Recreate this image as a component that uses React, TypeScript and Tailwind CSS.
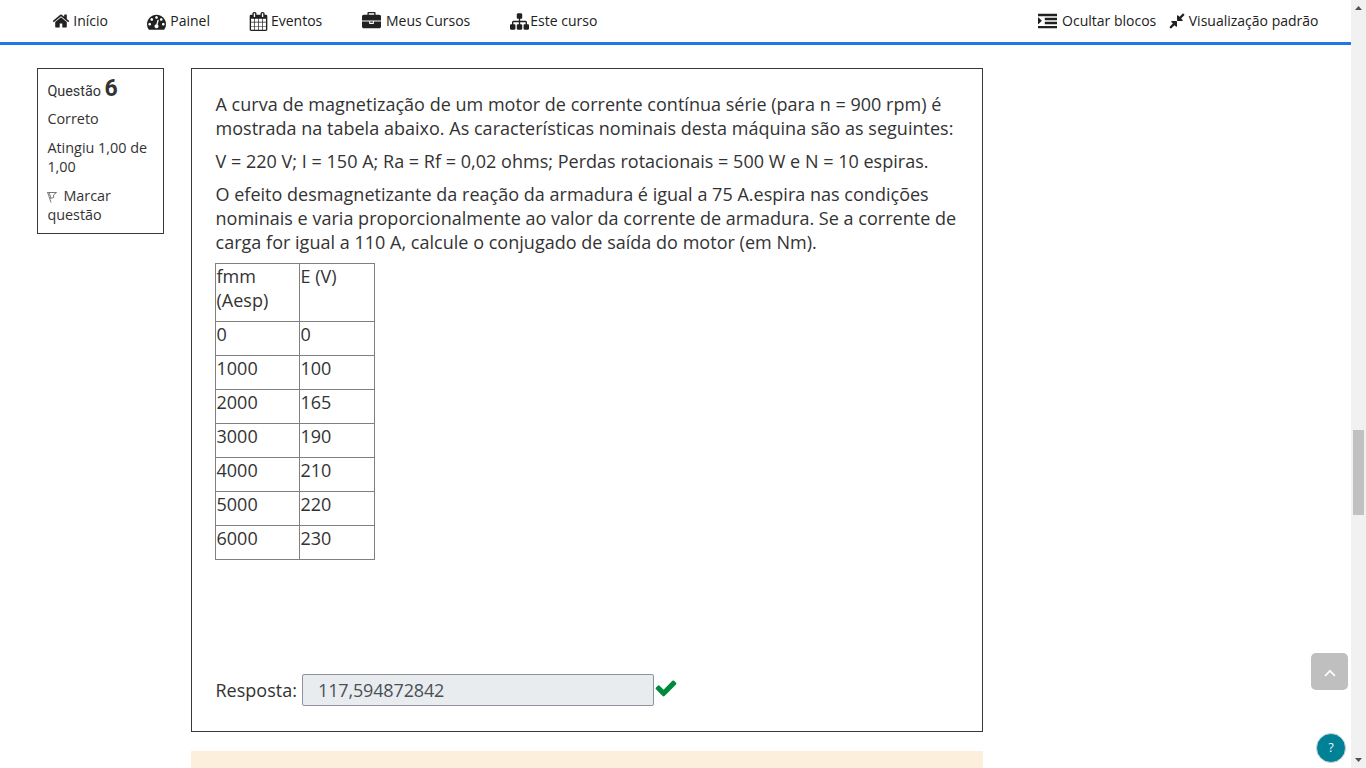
import React from "react";

const paths = {
  home: "M1472 992v480q0 26-19 45t-45 19h-384v-384h-256v384h-384q-26 0-45-19t-19-45v-480q0-1 .5-3t.5-3l575-474 575 474q1 2 1 6zm223-69l-62 74q-8 9-21 11h-3q-13 0-21-7l-692-577-692 577q-12 8-24 7-13-2-21-11l-62-74q-8-10-7-23.5t11-21.5l719-599q32-26 76-26t76 26l244 204v-195q0-14 9-23t23-9h192q14 0 23 9t9 23v408l219 182q10 8 11 21.5t-7 23.5z",
  dashboard: "M384 1152q0-53-37.5-90.5t-90.5-37.5-90.5 37.5-37.5 90.5 37.5 90.5 90.5 37.5 90.5-37.5 37.5-90.5zm192-448q0-53-37.5-90.5t-90.5-37.5-90.5 37.5-37.5 90.5 37.5 90.5 90.5 37.5 90.5-37.5 37.5-90.5zm428 481l101-382q6-26-7.5-48.5t-38.5-29.5-48 6.5-30 39.5l-101 382q-60 5-107 43.5t-63 98.5q-20 77 20 146t117 89 146-20 89-117q16-60-6-117t-72-91zm660-33q0-53-37.5-90.5t-90.5-37.5-90.5 37.5-37.5 90.5 37.5 90.5 90.5 37.5 90.5-37.5 37.5-90.5zm-640-640q0-53-37.5-90.5t-90.5-37.5-90.5 37.5-37.5 90.5 37.5 90.5 90.5 37.5 90.5-37.5 37.5-90.5zm448 192q0-53-37.5-90.5t-90.5-37.5-90.5 37.5-37.5 90.5 37.5 90.5 90.5 37.5 90.5-37.5 37.5-90.5zm320 448q0 261-141 483-19 29-54 29h-1402q-35 0-54-29-141-221-141-483 0-182 71-348t191-286 286-191 348-71 348 71 286 191 191 286 71 348z",
  calendar: "M192 1664h288v-288h-288v288zm352 0h320v-288h-320v288zm-352-352h288v-320h-288v320zm352 0h320v-320h-320v320zm-352-384h288v-288h-288v288zm736 736h320v-288h-320v288zm-384-736h320v-288h-320v288zm768 736h288v-288h-288v288zm-384-352h320v-320h-320v320zm-352-864v-288q0-13-9.5-22.5t-22.5-9.5h-64q-13 0-22.5 9.5t-9.5 22.5v288q0 13 9.5 22.5t22.5 9.5h64q13 0 22.5-9.5t9.5-22.5zm736 864h288v-320h-288v320zm-384-384h320v-288h-320v288zm384 0h288v-288h-288v288zm32-480v-288q0-13-9.5-22.5t-22.5-9.5h-64q-13 0-22.5 9.5t-9.5 22.5v288q0 13 9.5 22.5t22.5 9.5h64q13 0 22.5-9.5t9.5-22.5zm384-64v1280q0 52-38 90t-90 38h-1408q-52 0-90-38t-38-90v-1280q0-52 38-90t90-38h128v-96q0-66 47-113t113-47h64q66 0 113 47t47 113v96h384v-96q0-66 47-113t113-47h64q66 0 113 47t47 113v96h128q52 0 90 38t38 90z",
  briefcase: "M640 256h512v-128h-512v128zm1152 640v480q0 66-47 113t-113 47h-1472q-66 0-113-47t-47-113v-480h672v160q0 26 19 45t45 19h320q26 0 45-19t19-45v-160h672zm-768 0v128h-256v-128h256zm768-480v384h-1792v-384q0-66 47-113t113-47h352v-160q0-40 28-68t68-28h576q40 0 68 28t28 68v160h352q66 0 113 47t47 113z",
  sitemap: "M1792 1248v320q0 40-28 68t-68 28h-320q-40 0-68-28t-28-68v-320q0-40 28-68t68-28h96v-192h-512v192h96q40 0 68 28t28 68v320q0 40-28 68t-68 28h-320q-40 0-68-28t-28-68v-320q0-40 28-68t68-28h96v-192h-512v192h96q40 0 68 28t28 68v320q0 40-28 68t-68 28h-320q-40 0-68-28t-28-68v-320q0-40 28-68t68-28h96v-192q0-52 38-90t90-38h512v-192h-96q-40 0-68-28t-28-68v-320q0-40 28-68t68-28h320q40 0 68 28t28 68v320q0 40-28 68t-68 28h-96v192h512q52 0 90 38t38 90v192h96q40 0 68 28t28 68z",
  indent: "M352 832q0 14-9 23l-288 288q-9 9-23 9-13 0-22.5-9.5t-9.5-22.5v-576q0-13 9.5-22.5t22.5-9.5q14 0 23 9l288 288q9 9 9 23zM0 160h1792v230h-1792zM640 544h1152v230h-1152zM640 928h1152v230h-1152zM0 1312h1792v230h-1792z",
  compress: "M896 960v448q0 26-19 45t-45 19-45-19l-144-144-332 332q-10 10-23 10t-23-10l-114-114q-10-10-10-23t10-23l332-332-144-144q-19-19-19-45t19-45 45-19h448q26 0 45 19t19 45zm755-672q0 13-10 23l-332 332 144 144q19 19 19 45t-19 45-45 19h-448q-26 0-45-19t-19-45v-448q0-26 19-45t45-19 45 19l144 144 332-332q10-10 23-10t23 10l114 114q10 10 10 23z",
  check: "M1671 566q0 40-28 68l-724 724-136 136q-28 28-68 28t-68-28l-136-136-362-362q-28-28-28-68t28-68l136-136q28-28 68-28t68 28l294 295 656-657q28-28 68-28t68 28l136 136q28 28 28 68z",
};

function Icon({ name, className }: { name: keyof typeof paths; className: string }) {
  return (
    <svg viewBox="0 0 1792 1792" className={`shrink-0 overflow-visible fill-current ${className}`}>
      <path d={paths[name]} />
    </svg>
  );
}

function NavItem({ icon, label, className, iconClass }: { icon: keyof typeof paths; label: string; className: string; iconClass: string }) {
  return (
    <a className={`flex shrink-0 items-center whitespace-nowrap ${className}`}>
      <Icon name={icon} className={iconClass} />
      <span className="mb-[2px]">{label}</span>
    </a>
  );
}

const rows = [
  ["0", "0"],
  ["1000", "100"],
  ["2000", "165"],
  ["3000", "190"],
  ["4000", "210"],
  ["5000", "220"],
  ["6000", "230"],
];

export default function App() {
  return (
    <div className="relative flex h-[768px] w-[1366px] overflow-hidden bg-white font-['Open_Sans',sans-serif] text-[#333]">
      <div className="flex w-[1351px] flex-col">
        <header className="flex h-[45px] shrink-0 items-center border-b-3 border-[#2475e9] text-[14px] text-[#212121]">
          <NavItem icon="home" label="Início" className="ml-[52.3px] w-[95.2px]" iconClass="mr-[3px] size-[18px]" />
          <NavItem icon="dashboard" label="Painel" className="w-[101.5px]" iconClass="mr-[3.8px] size-[19px]" />
          <NavItem icon="calendar" label="Eventos" className="w-[113px]" iconClass="mt-px mr-[3px] size-[19px]" />
          <NavItem icon="briefcase" label="Meus Cursos" className="w-[148px]" iconClass="mr-[5px] size-[19px]" />
          <NavItem icon="sitemap" label="Este curso" className="w-[528.3px]" iconClass="mr-[1.3px] size-[19px]" />
          <NavItem icon="indent" label="Ocultar blocos" className="w-[129.9px]" iconClass="mr-[4.8px] size-[19px]" />
          <NavItem icon="compress" label="Visualização padrão" className="" iconClass="mr-[2.6px] size-[18px]" />
        </header>
        <main className="flex items-start pt-[23px] pl-[37px]">
          <aside className="h-[166px] w-[127px] shrink-0 border border-[#343a40] px-[9.4px] text-[14.4px] leading-[19px]">
            <h3 className="mt-[6px] h-[27px] font-['Roboto',sans-serif] text-[14.4px] leading-[27px]">
              Questão <span className="text-[23px] font-bold">6</span>
            </h3>
            <p className="mt-[7px]">Correto</p>
            <p className="mt-[10px]">Atingiu 1,00 de 1,00</p>
            <p className="mt-[10px]">
              <svg viewBox="0 0 12 12" className="mr-[4px] inline size-[12px] fill-none stroke-[#777]">
                <path d="M0.5 1L4 11.5M0.5 1.5H9.5L6.5 4L6.8 6.5L3.2 7.5M2.2 2L4 7" />
              </svg>
              Marcar questão
            </p>
          </aside>
          <div className="ml-[27px] w-[792px] shrink-0">
            <section className="h-[664px] border border-[#343a40] px-[23.5px] pt-[23px] text-[18px] leading-[24px]">
              <div className="tracking-[0.02px]">
                <p className="whitespace-nowrap">
                  A curva de magnetização de um motor de corrente contínua série (para n = 900 rpm) é<br />
                  mostrada na tabela abaixo. As características nominais desta máquina são as seguintes:
                </p>
                <p className="mt-[9px] whitespace-nowrap">
                  V = 220 V; I = 150 A; Ra = Rf = 0,02 ohms; Perdas rotacionais = 500 W e N = 10 espiras.
                </p>
                <p className="mt-[9px] whitespace-nowrap">
                  O efeito desmagnetizante da reação da armadura é igual a 75 A.espira nas condições<br />
                  nominais e varia proporcionalmente ao valor da corrente de armadura. Se a corrente de<br />
                  carga for igual a 110 A, calcule o conjugado de saída do motor (em Nm).
                </p>
              </div>
              <table className="-ml-[0.5px] mt-[9px] w-[160px] table-fixed border-collapse">
                <tbody>
                  <tr className="h-[58px] align-top">
                    <td className="w-[84px] border border-[#808080] pl-[0.5px]">fmm (Aesp)</td>
                    <td className="border border-[#808080] pl-[0.5px]">E (V)</td>
                  </tr>
                  {rows.map(([f, e]) => (
                    <tr key={f} className="h-[34px] align-top">
                      <td className="border border-[#808080] pl-[0.5px]">{f}</td>
                      <td className="border border-[#808080] pl-[0.5px]">{e}</td>
                    </tr>
                  ))}
                </tbody>
              </table>
              <div className="mt-[114px] flex h-[32px] items-center">
                <label className="w-[86.5px] shrink-0">Resposta:</label>
                <div className="flex h-[32px] w-[352px] shrink-0 items-center rounded-[2px] border border-[#8f919d] bg-[#e9ecef] pl-[15px] tracking-[-0.15px] text-[#495057]">
                  117,594872842
                </div>
                <Icon name="check" className="mb-[4px] size-[24px] text-[#00893a]" />
              </div>
            </section>
            <div className="mt-[19px] h-[40px] bg-[#fcefdc]" />
          </div>
        </main>
      </div>
      <div className="flex w-[15px] flex-col items-center bg-[#f1f1f1]">
        <svg viewBox="0 0 15 15" className="size-[15px] fill-[#505050]">
          <path d="M4 10L7.5 6L11 10Z" />
        </svg>
        <div className="mt-[415px] h-[85px] w-[11px] shrink-0 bg-[#c1c1c1]" />
        <svg viewBox="0 0 15 15" className="mt-auto size-[15px] fill-[#505050]">
          <path d="M4 5L7.5 9L11 5Z" />
        </svg>
      </div>
      <button className="absolute top-[653px] left-[1311px] flex size-[37px] items-center justify-center rounded-[5px] bg-[#bfbfbf]">
        <svg viewBox="0 0 12 8" className="mt-[2px] h-[8px] w-[12px] fill-none stroke-white stroke-[1.7]">
          <path d="M1 7L6 1.8L11 7" />
        </svg>
      </button>
      <button className="absolute top-[733px] left-[1316px] flex size-[30px] items-center justify-center rounded-full border border-[#c9d4d6] bg-[#008196] text-[12px] text-white">
        ?
      </button>
    </div>
  );
}
